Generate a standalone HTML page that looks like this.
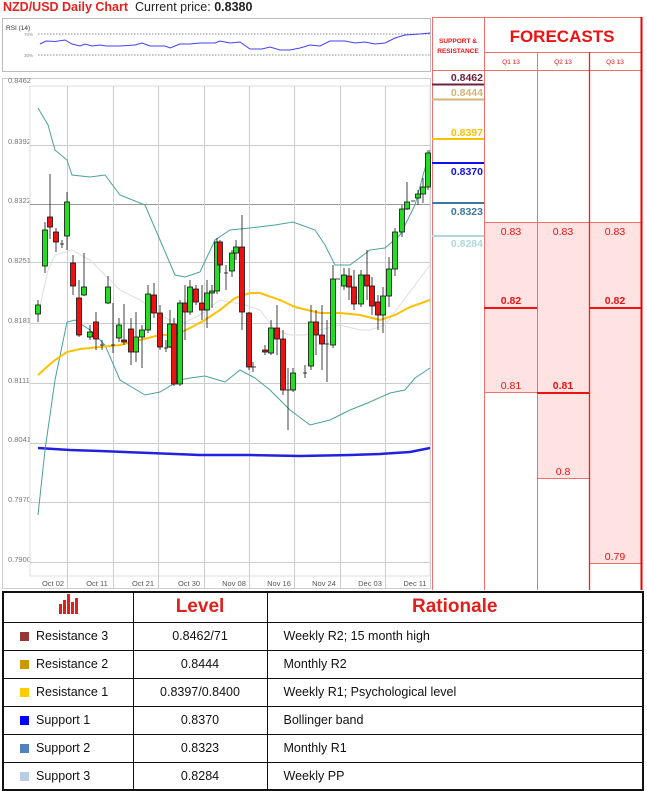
<!DOCTYPE html>
<html><head><meta charset="utf-8"><style>
*{margin:0;padding:0;box-sizing:border-box}
body{width:647px;height:790px;background:#fff;font-family:"Liberation Sans",sans-serif;position:relative;overflow:hidden}
.abs{position:absolute}
table{border-collapse:collapse}
#bt{position:absolute;left:2px;top:591px;width:642px;border:2px solid #111}
#bt td{border:1px solid #111;font-size:12.5px;color:#111;height:28px}
#bt tr.h td{height:30px;font-weight:bold;color:#e0201c;font-size:19px;text-align:center}
.sq{display:inline-block;width:9px;height:9px;margin:0 7px 0 16px;vertical-align:-1px}
.c2{text-align:center}
.c3{padding-left:16px}
</style></head><body>
<div class="abs" style="left:3px;top:0;font-size:12.5px;font-weight:bold;color:#e8201c">NZD/USD Daily Chart</div>
<div class="abs" style="left:135px;top:0;font-size:12.5px;color:#222">Current price: <b>0.8380</b></div>

<svg class="abs" style="left:0;top:0" width="647" height="590">
 <!-- RSI -->
 <rect x="2.5" y="18.5" width="428" height="53" fill="#fff" stroke="#bbb"/>
 <text x="6" y="30" font-size="6.5" font-family="Liberation Sans" fill="#333">RSI (14)</text>
 <text x="24" y="36" font-size="4.5" fill="#888" font-family="Liberation Sans">70%</text>
 <text x="24" y="57" font-size="4.5" fill="#888" font-family="Liberation Sans">30%</text>
 <line x1="38" y1="34" x2="430" y2="34" stroke="#666" stroke-dasharray="1.5,1.5" stroke-width=".8"/>
 <line x1="38" y1="55" x2="430" y2="55" stroke="#666" stroke-dasharray="1.5,1.5" stroke-width=".8"/>
 <polyline fill="none" stroke="#4040ff" stroke-width="1" points="40,44 46,41 55,41.5 65,40 72,44 80,46 85,44 92,46 100,45 106,46 120,46 135,45 142,43 150,46 165,46 170,48 180,44 190,44 200,43 215,43 220,41 230,43 240,42 250,49 262,49 270,47 280,50 290,50 300,48 310,45 320,46 330,41 345,41 355,43 365,42 375,44 385,43 395,38 405,35 420,34 430,33"/>

 <!-- main chart frame -->
 <rect x="2.5" y="78.5" width="428" height="510" fill="#fff" stroke="#ccc"/>
 <g font-family="Liberation Sans" font-size="7.5" fill="#777">
  <text x="8" y="83">0.8462</text><text x="8" y="144">0.8392</text><text x="8" y="203">0.8322</text>
  <text x="8" y="263">0.8251</text><text x="8" y="323">0.8181</text><text x="8" y="383">0.8111</text>
  <text x="8" y="442">0.8041</text><text x="8" y="502">0.7970</text><text x="8" y="562">0.7900</text>
 </g>
 <rect x="30" y="86" width="400" height="490" fill="none" stroke="#ddd"/>
 <g stroke="#ccc" stroke-width="1">
  <line x1="30" y1="145.5" x2="430" y2="145.5"/><line x1="30" y1="204.5" x2="430" y2="204.5" stroke="#999"/>
  <line x1="30" y1="262.5" x2="430" y2="262.5"/><line x1="30" y1="323.5" x2="430" y2="323.5"/>
  <line x1="30" y1="383.5" x2="430" y2="383.5"/><line x1="30" y1="443.5" x2="430" y2="443.5"/>
  <line x1="30" y1="502.5" x2="430" y2="502.5"/><line x1="30" y1="562.5" x2="430" y2="562.5"/>
  <line x1="67.5" y1="86" x2="67.5" y2="588"/><line x1="113.5" y1="86" x2="113.5" y2="588"/>
  <line x1="158.5" y1="86" x2="158.5" y2="588"/><line x1="204.5" y1="86" x2="204.5" y2="588"/>
  <line x1="249.5" y1="86" x2="249.5" y2="588"/><line x1="294.5" y1="86" x2="294.5" y2="588"/>
  <line x1="340.5" y1="86" x2="340.5" y2="588"/><line x1="385.5" y1="86" x2="385.5" y2="588"/>
 </g>
 <g font-family="Liberation Sans" font-size="7.5" fill="#555" text-anchor="middle">
  <text x="53" y="586">Oct 02</text><text x="97" y="586">Oct 11</text><text x="143" y="586">Oct 21</text>
  <text x="189" y="586">Oct 30</text><text x="234" y="586">Nov 08</text><text x="279" y="586">Nov 16</text>
  <text x="324" y="586">Nov 24</text><text x="370" y="586">Dec 03</text><text x="415" y="586">Dec 11</text>
 </g>
 <polyline fill="none" stroke="#2222dd" stroke-width="2.5" points="38,448 70,450 100,451 150,453 200,455 250,455 300,456 350,455 380,454 410,452 430,448"/>
 <polyline fill="none" stroke="#4aa0a0" stroke-width="1" points="38,108 48,125 55,150 67,160 72,175 90,177 105,175 120,195 145,205 160,240 175,275 185,277 200,272 215,240 230,230 250,228 275,225 293,222 315,230 325,245 335,265 350,265 370,250 385,248 400,235 415,205 430,150"/>
 <polyline fill="none" stroke="#4aa0a0" stroke-width="1" points="38,515 45,450 55,380 67,322 75,320 90,330 105,345 120,380 145,395 160,392 180,380 190,378 205,376 225,382 240,370 255,378 270,390 290,410 310,425 330,420 350,410 370,402 390,393 405,390 415,378 430,368"/>
 <polyline fill="none" stroke="#ddd" stroke-width="1" points="38,315 48,270 55,255 72,250 90,260 105,275 120,290 140,300 160,315 180,325 200,315 220,300 245,305 260,310 275,330 290,335 305,335 320,330 340,325 360,330 370,330 385,325 400,305 415,285 430,265"/>
 <polyline fill="none" stroke="#ffc000" stroke-width="2" points="38,375 48,366 55,360 67,352 80,349 100,347 120,345 140,340 160,335 175,335 190,328 205,320 220,310 235,298 250,293 260,293 280,300 295,307 320,313 340,313 360,315 380,320 395,315 410,307 430,300"/>
 <g stroke="#111" stroke-width=".8">
  <g>
  <line x1="38" y1="300" x2="38" y2="322"/><line x1="45" y1="222" x2="45" y2="273"/><line x1="50" y1="174" x2="50" y2="239"/><line x1="56" y1="228" x2="56" y2="252"/><line x1="62" y1="240" x2="62" y2="248"/><line x1="67" y1="192" x2="67" y2="250"/><line x1="73" y1="255" x2="73" y2="295"/><line x1="79" y1="280" x2="79" y2="337"/><line x1="84" y1="253" x2="84" y2="296"/><line x1="90" y1="325" x2="90" y2="340"/><line x1="96" y1="312" x2="96" y2="350"/><line x1="102" y1="340" x2="102" y2="350"/><line x1="108" y1="276" x2="108" y2="304"/><line x1="113" y1="303" x2="113" y2="353"/><line x1="119" y1="318" x2="119" y2="342"/><line x1="124" y1="304" x2="124" y2="345"/><line x1="131" y1="318" x2="131" y2="365"/><line x1="136" y1="312" x2="136" y2="362"/><line x1="142" y1="325" x2="142" y2="368"/><line x1="148" y1="285" x2="148" y2="333"/><line x1="154" y1="283" x2="154" y2="318"/><line x1="160" y1="305" x2="160" y2="350"/><line x1="166" y1="340" x2="166" y2="352"/><line x1="170" y1="310" x2="170" y2="348"/><line x1="174" y1="318" x2="174" y2="386"/><line x1="180" y1="300" x2="180" y2="386"/><line x1="185" y1="285" x2="185" y2="340"/><line x1="190" y1="280" x2="190" y2="315"/><line x1="196" y1="285" x2="196" y2="305"/><line x1="202" y1="285" x2="202" y2="320"/><line x1="207" y1="280" x2="207" y2="328"/><line x1="212" y1="285" x2="212" y2="308"/><line x1="217" y1="238" x2="217" y2="294"/><line x1="220" y1="240" x2="220" y2="273"/><line x1="226" y1="265" x2="226" y2="290"/><line x1="232" y1="250" x2="232" y2="277"/><line x1="236" y1="240" x2="236" y2="260"/><line x1="242" y1="215" x2="242" y2="330"/><line x1="249" y1="312" x2="249" y2="370"/><line x1="253" y1="362" x2="253" y2="372"/><line x1="265" y1="345" x2="265" y2="355"/><line x1="271" y1="320" x2="271" y2="355"/><line x1="277" y1="305" x2="277" y2="355"/><line x1="283" y1="330" x2="283" y2="395"/><line x1="288" y1="368" x2="288" y2="430"/><line x1="293" y1="368" x2="293" y2="392"/><line x1="305" y1="365" x2="305" y2="378"/><line x1="311" y1="305" x2="311" y2="370"/><line x1="316" y1="310" x2="316" y2="355"/><line x1="322" y1="305" x2="322" y2="370"/><line x1="327" y1="320" x2="327" y2="382"/><line x1="333" y1="265" x2="333" y2="348"/><line x1="344" y1="268" x2="344" y2="290"/><line x1="349" y1="268" x2="349" y2="300"/><line x1="354" y1="270" x2="354" y2="310"/><line x1="361" y1="270" x2="361" y2="307"/><line x1="367" y1="250" x2="367" y2="300"/><line x1="372" y1="277" x2="372" y2="315"/><line x1="378" y1="295" x2="378" y2="330"/><line x1="383" y1="287" x2="383" y2="333"/><line x1="389" y1="257" x2="389" y2="307"/><line x1="395" y1="228" x2="395" y2="276"/><line x1="402" y1="205" x2="402" y2="237"/><line x1="407" y1="182" x2="407" y2="210"/><line x1="418" y1="190" x2="418" y2="205"/><line x1="423" y1="178" x2="423" y2="203"/><line x1="428" y1="150" x2="428" y2="190"/>
  <line x1="60" y1="244" x2="64" y2="244"/><line x1="100" y1="345" x2="104" y2="345"/><line x1="111" y1="345" x2="115" y2="345"/><line x1="164" y1="348" x2="168" y2="348"/><line x1="224" y1="273" x2="228" y2="273"/><line x1="251" y1="367" x2="256" y2="367"/><line x1="286" y1="390" x2="290" y2="390"/><line x1="303" y1="373" x2="307" y2="373"/><line x1="325" y1="344" x2="329" y2="344"/><line x1="336" y1="279" x2="340" y2="279"/><line x1="411" y1="201" x2="415" y2="201"/>
  </g>
  <g fill="#22dd22">
  <rect x="35.5" y="305" width="5" height="9"/><rect x="42.5" y="230" width="5" height="36"/><rect x="64.5" y="202" width="5" height="34"/><rect x="81.5" y="287" width="5" height="8"/><rect x="87.5" y="332" width="5" height="5"/><rect x="105.5" y="287" width="5" height="16"/><rect x="116.5" y="325" width="5" height="13"/><rect x="133.5" y="337" width="5" height="15"/><rect x="139.5" y="330" width="5" height="7"/><rect x="145.5" y="294" width="5" height="36"/><rect x="167.5" y="324" width="5" height="23"/><rect x="177.5" y="303" width="5" height="81"/><rect x="187.5" y="287" width="5" height="25"/><rect x="204.5" y="293" width="5" height="17"/><rect x="209.5" y="291" width="5" height="2"/><rect x="214.5" y="242" width="5" height="49"/><rect x="229.5" y="253" width="5" height="18"/><rect x="233.5" y="247" width="5" height="6"/><rect x="268.5" y="328" width="5" height="25"/><rect x="290.5" y="373" width="5" height="17"/><rect x="308.5" y="322" width="5" height="44"/><rect x="330.5" y="279" width="5" height="66"/><rect x="341.5" y="275" width="5" height="11"/><rect x="358.5" y="275" width="5" height="29"/><rect x="380.5" y="296" width="5" height="19"/><rect x="386.5" y="269" width="5" height="27"/><rect x="392.5" y="232" width="5" height="37"/><rect x="399.5" y="209" width="5" height="23"/><rect x="404.5" y="202" width="5" height="7"/><rect x="415.5" y="194" width="5" height="4"/><rect x="420.5" y="187" width="5" height="7"/><rect x="425.5" y="153" width="5" height="34"/>
  </g>
  <g fill="#ee1111">
  <rect x="47.5" y="217" width="5" height="10"/><rect x="53.5" y="232" width="5" height="10"/><rect x="70.5" y="263" width="5" height="23"/><rect x="76.5" y="298" width="5" height="37"/><rect x="93.5" y="322" width="5" height="17"/><rect x="121.5" y="340" width="5" height="2"/><rect x="128.5" y="329" width="5" height="23"/><rect x="151.5" y="295" width="5" height="18"/><rect x="157.5" y="313" width="5" height="34"/><rect x="171.5" y="324" width="5" height="60"/><rect x="182.5" y="303" width="5" height="9"/><rect x="193.5" y="289" width="5" height="13"/><rect x="199.5" y="303" width="5" height="7"/><rect x="217.5" y="242" width="5" height="23"/><rect x="239.5" y="247" width="5" height="65"/><rect x="246.5" y="313" width="5" height="54"/><rect x="262.5" y="350" width="5" height="2"/><rect x="274.5" y="328" width="5" height="11"/><rect x="280.5" y="339" width="5" height="51"/><rect x="313.5" y="322" width="5" height="13"/><rect x="319.5" y="335" width="5" height="9"/><rect x="346.5" y="276" width="5" height="11"/><rect x="351.5" y="287" width="5" height="17"/><rect x="364.5" y="275" width="5" height="11"/><rect x="369.5" y="286" width="5" height="20"/><rect x="375.5" y="302" width="5" height="13"/>
  </g>
 </g>

 <rect x="484" y="222" width="53" height="170" fill="#ffe3e3"/>
 <rect x="537" y="222" width="52" height="256" fill="#ffe3e3"/>
 <rect x="589" y="222" width="52" height="341" fill="#ffe3e3"/>
 <g stroke="#f07070" stroke-width="1">
  <line x1="432.5" y1="17" x2="432.5" y2="590"/><line x1="484.5" y1="17" x2="484.5" y2="590"/>
  <line x1="537.5" y1="52" x2="537.5" y2="590"/>
  <line x1="432" y1="17.5" x2="642" y2="17.5"/><line x1="484" y1="52.5" x2="642" y2="52.5"/>
  <line x1="432" y1="70.5" x2="642" y2="70.5"/>
  <line x1="484" y1="222.5" x2="642" y2="222.5"/>
  <line x1="484" y1="392.5" x2="537" y2="392.5"/><line x1="537" y1="478.5" x2="589" y2="478.5"/><line x1="589" y1="563.5" x2="642" y2="563.5"/>
 </g>
 <line x1="589.5" y1="52" x2="589.5" y2="590" stroke="#ee2020" stroke-width="1.3"/>
 <line x1="641.5" y1="17" x2="641.5" y2="590" stroke="#ee0000" stroke-width="2"/>
 <g stroke="#ee1111" stroke-width="2">
  <line x1="484" y1="308" x2="537" y2="308"/><line x1="589" y1="308" x2="641" y2="308"/><line x1="537" y1="393" x2="589" y2="393"/>
 </g>
 <g font-family="Liberation Sans" fill="#ee1111" text-anchor="middle">
  <text x="458" y="43" font-size="6.5" font-weight="bold">SUPPORT &amp;</text>
  <text x="458" y="53" font-size="6.5" font-weight="bold">RESISTANCE</text>
  <text x="562" y="42" font-size="17" font-weight="bold">FORECASTS</text>
  <text x="511" y="64" font-size="6.5">Q1 13</text><text x="563" y="64" font-size="6.5">Q2 13</text><text x="615" y="64" font-size="6.5">Q3 13</text>
  <text x="511" y="235" font-size="10.5">0.83</text><text x="563" y="235" font-size="10.5">0.83</text><text x="615" y="235" font-size="10.5">0.83</text>
  <text x="511" y="304" font-size="10.5" font-weight="bold">0.82</text><text x="615" y="304" font-size="10.5" font-weight="bold">0.82</text>
  <text x="511" y="389" font-size="10.5">0.81</text><text x="563" y="389" font-size="10.5" font-weight="bold">0.81</text>
  <text x="563" y="475" font-size="10.5">0.8</text><text x="615" y="560" font-size="10.5">0.79</text>
 </g>
 <line x1="432" y1="84.5" x2="484" y2="84.5" stroke="#6b2040" stroke-width="2"/>
 <line x1="432" y1="99.5" x2="484" y2="99.5" stroke="#d4b47a" stroke-width="2"/>
 <line x1="432" y1="139" x2="484" y2="139" stroke="#ffc000" stroke-width="2"/>
 <line x1="432" y1="163" x2="484" y2="163" stroke="#1010ee" stroke-width="2"/>
 <line x1="432" y1="203" x2="484" y2="203" stroke="#3c78a0" stroke-width="2"/>
 <line x1="432" y1="236" x2="484" y2="236" stroke="#b0d8d8" stroke-width="2"/>
 <g font-family="Liberation Sans" font-size="10.5" font-weight="bold" text-anchor="end">
  <text x="483" y="81" fill="#6b2040">0.8462</text>
  <text x="483" y="96" fill="#d4b47a">0.8444</text>
  <text x="483" y="136" fill="#ffc000">0.8397</text>
  <text x="483" y="175" fill="#1010ee">0.8370</text>
  <text x="483" y="215" fill="#3c78a0">0.8323</text>
  <text x="483" y="247" fill="#b0d8d8">0.8284</text>
 </g>
</svg>

<table id="bt">
 <tr class="h"><td style="width:130px"><svg width="22" height="20" viewBox="0 0 22 20"><g fill="#e0201c"><rect x="2" y="10" width="3" height="10"/><rect x="6" y="6" width="3" height="14"/><rect x="10" y="0" width="3" height="20"/><rect x="14" y="8" width="3" height="12"/><rect x="18" y="4" width="3" height="16"/></g></svg></td><td style="width:134px">Level</td><td>Rationale</td></tr>
 <tr><td><span class="sq" style="background:#953735"></span>Resistance 3</td><td class="c2">0.8462/71</td><td class="c3">Weekly R2; 15 month high</td></tr>
 <tr><td><span class="sq" style="background:#cc9900"></span>Resistance 2</td><td class="c2">0.8444</td><td class="c3">Monthly R2</td></tr>
 <tr><td><span class="sq" style="background:#ffcc00"></span>Resistance 1</td><td class="c2">0.8397/0.8400</td><td class="c3">Weekly R1; Psychological level</td></tr>
 <tr><td><span class="sq" style="background:#0000ff"></span>Support 1</td><td class="c2">0.8370</td><td class="c3">Bollinger band</td></tr>
 <tr><td><span class="sq" style="background:#4f81bd"></span>Support 2</td><td class="c2">0.8323</td><td class="c3">Monthly R1</td></tr>
 <tr><td><span class="sq" style="background:#b9cde5"></span>Support 3</td><td class="c2">0.8284</td><td class="c3">Weekly PP</td></tr>
</table>
</body></html>
